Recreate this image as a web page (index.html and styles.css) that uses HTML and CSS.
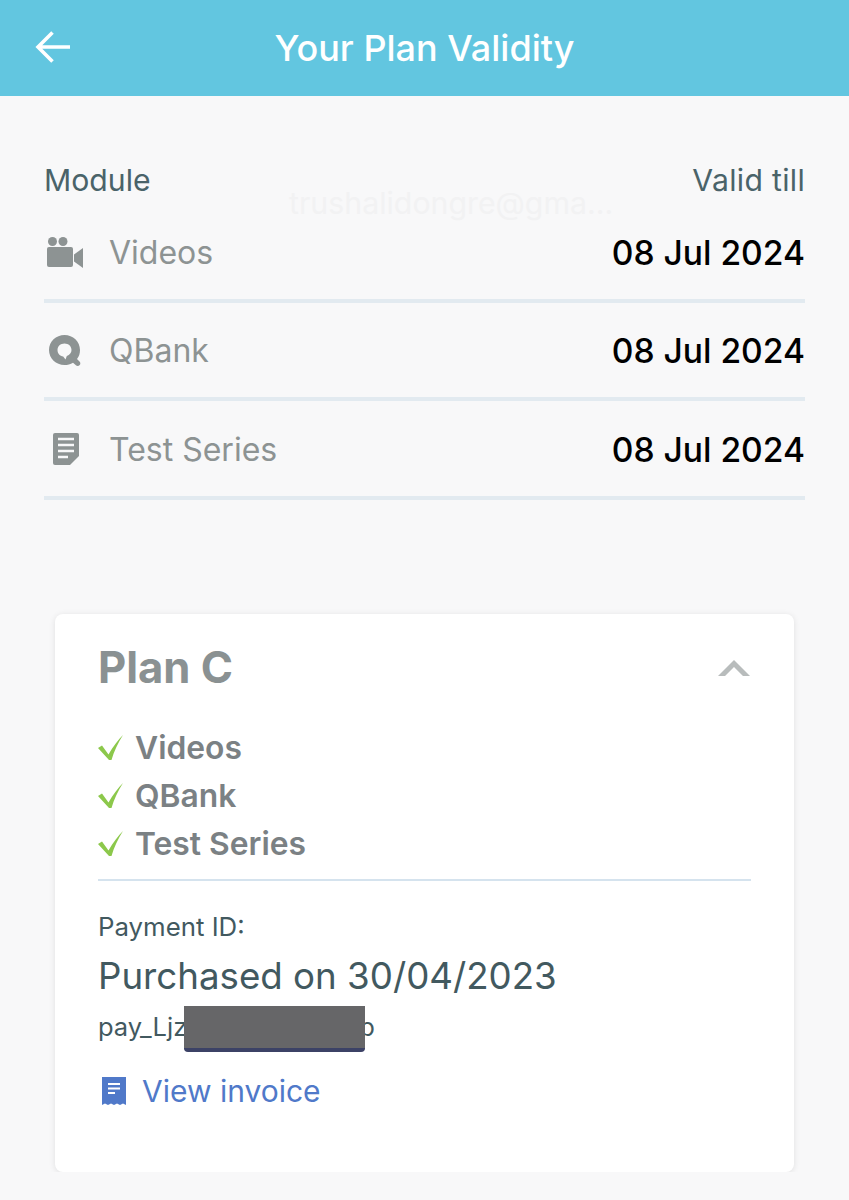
FILE: index.html
```html
<!DOCTYPE html>
<html>
<head>
  <title>Your Plan Validity</title>
  <link rel="stylesheet" href="styles.css">
</head>
<body>
  <div class="header">
    <svg class="back-icon" width="38" height="36" viewBox="0 0 38 36">
      <path d="M36 18H4M18.500 3.500L4 18l14.500 14.500" fill="none" stroke="#fff" stroke-width="3.600"/>
    </svg>
    <h1 class="title">Your Plan Validity</h1>
  </div>

  <div class="modules">
    <div class="modules-head">
      <span>Module</span>
      <span class="valid-till">Valid till</span>
    </div>
    <div class="watermark">trushalidongre@gma...</div>

    <div class="module-row">
      <div class="module-name">
        <svg class="module-icon" width="39" height="34" viewBox="-1 0 39 34">
          <circle cx="7.500" cy="6.500" r="4.500" fill="#8d9393"/>
          <circle cx="18" cy="6.500" r="4.500" fill="#8d9393"/>
          <rect x="2" y="12" width="26" height="20" rx="2" fill="#8d9393"/>
          <path d="M29 19.500l9-6.500v20l-9-6.500z" fill="#8d9393"/>
        </svg>
        <span>Videos</span>
      </div>
      <span class="module-date">08 Jul 2024</span>
    </div>

    <div class="module-row">
      <div class="module-name">
        <svg class="module-icon" width="39" height="34" viewBox="-2 0 39 34">
          <path fill-rule="evenodd" fill="#8d9393" d="M18.500 1C27 1 34 7.500 34 16c0 3.500-1 6.500-3 9l2.500 2.500c1 1 1.200 2.500.2 3.600-1 1.100-2.700 1.200-3.800.2L27 28.700c-2.500 1.500-5.500 2.300-8.500 2.300C10 31 3 24.500 3 16S10 1 18.500 1zM18.500 9.500c-4 0-7 2.800-7 6.500 0 3.500 2.500 6 5.700 6.500l2.300 3 1.300-3.600c3-1 4.700-3.200 4.700-5.900 0-3.700-3-6.500-7-6.500z"/>
        </svg>
        <span>QBank</span>
      </div>
      <span class="module-date">08 Jul 2024</span>
    </div>

    <div class="module-row">
      <div class="module-name">
        <svg class="module-icon" width="39" height="34" viewBox="-3 0 39 34">
          <path fill="#8d9393" d="M8 1h22a2 2 0 0 1 2 2v21l-9 9H8a2 2 0 0 1-2-2V3a2 2 0 0 1 2-2z"/>
          <path d="M11 7h16M11 13h16M11 19h16M11 25h10" stroke="#f8f8f9" stroke-width="2.400" fill="none"/>
        </svg>
        <span>Test Series</span>
      </div>
      <span class="module-date">08 Jul 2024</span>
    </div>
  </div>

  <div class="card">
    <div class="card-head">
      <h2 class="plan-name">Plan C</h2>
      <svg class="chevron" width="32" height="16" viewBox="0 0 32 16">
        <path d="M0 16L16 0l16 16h-7L16 7 7 16z" fill="#b8bcbc"/>
      </svg>
    </div>

    <ul class="features">
      <li>
        <svg width="26" height="26" viewBox="0 0 26 26"><path d="M0 13l4-2.500 6.500 9C15 11.500 20 5 25 0c-5 8-9 16-11.500 25h-2.500z" fill="#8cc84b"/></svg>
        Videos
      </li>
      <li>
        <svg width="26" height="26" viewBox="0 0 26 26"><path d="M0 13l4-2.500 6.500 9C15 11.500 20 5 25 0c-5 8-9 16-11.500 25h-2.500z" fill="#8cc84b"/></svg>
        QBank
      </li>
      <li>
        <svg width="26" height="26" viewBox="0 0 26 26"><path d="M0 13l4-2.500 6.500 9C15 11.500 20 5 25 0c-5 8-9 16-11.500 25h-2.500z" fill="#8cc84b"/></svg>
        Test Series
      </li>
    </ul>

    <div class="payment">
      <div class="payment-label">Payment ID:</div>
      <div class="purchased">Purchased on 30/04/2023</div>
      <div class="payment-id">pay_Ljz<span class="redacted-gap"><span class="redacted"></span></span>p</div>
      <a class="invoice" href="#">
        <svg class="invoice-icon" width="26" height="30" viewBox="0 0 26 30">
          <path fill="#5079c9" d="M1 1h24v28l-3-1.500-3 1.500-3-1.500-3 1.500-3-1.500-3 1.500-3-1.500-3 1.500z"/>
          <path d="M7 8h12M7 12.500h12M7 17h7" stroke="#fff" stroke-width="1.800" fill="none"/>
        </svg>
        View invoice
      </a>
    </div>
  </div>
</body>
</html>
```

FILE: styles.css
```css
* {
  box-sizing: border-box;
}

body {
  margin: 0;
  background-color: #f8f8f9;
  font-family: Inter, "Liberation Sans", sans-serif;
}

.header {
  position: relative;
  display: flex;
  align-items: center;
  justify-content: center;
  height: 96px;
  background-color: #62c6e0;
}

.back-icon {
  position: absolute;
  left: 34px;
  top: 29px;
}

.title {
  margin: 0;
  color: #fff;
  font-size: 36px;
  font-weight: 500;
}

.modules {
  position: relative;
  margin: 0 44px;
  padding-top: 67px;
}

.modules-head {
  display: flex;
  justify-content: space-between;
  margin-bottom: 7px;
  color: #4a6369;
  font-size: 30.200px;
  line-height: 34px;
}

.valid-till {
  letter-spacing: 0.3px;
}

.watermark {
  position: absolute;
  left: 245px;
  top: 91px;
  color: #f2f2f3;
  font-size: 30.300px;
  line-height: 32px;
}

.module-row {
  display: flex;
  align-items: center;
  justify-content: space-between;
  height: 98.500px;
  padding-top: 2px;
  border-bottom: 4px solid #e2eaf0;
}

.module-name {
  display: flex;
  align-items: center;
  gap: 26px;
  color: #8d9393;
  font-size: 32px;
}

.module-date {
  color: #000;
  font-size: 33.600px;
  font-weight: 500;
}

.card {
  margin: 114px 55px 0;
  height: 558px;
  padding: 26px 43px 0;
  background-color: #fff;
  border-radius: 8px;
  box-shadow: 0 1px 6px rgba(0, 0, 0, 0.1);
}

.card-head {
  display: flex;
  align-items: center;
  justify-content: space-between;
  height: 56px;
}

.plan-name {
  margin: 0;
  color: #8a9192;
  font-size: 43.600px;
  font-weight: 700;
}

.chevron {
  margin-top: 1px;
  margin-right: 1px;
}

.features {
  margin: 28px 0 0;
  padding: 0 0 11px;
  list-style: none;
  border-bottom: 2px solid #d5e3ee;
}

.features li {
  display: flex;
  align-items: center;
  gap: 11px;
  height: 48px;
  color: #7b8184;
  font-size: 31.800px;
  font-weight: 600;
}

.payment {
  padding-top: 30px;
}

.payment-label {
  color: #42595f;
  font-size: 25.800px;
  line-height: 32px;
}

.purchased {
  margin-top: 11px;
  color: #42595f;
  font-size: 36.700px;
  line-height: 44px;
}

.payment-id {
  margin-top: 13px;
  color: #42595f;
  font-size: 25.500px;
  line-height: 32px;
}

.redacted-gap {
  position: relative;
  display: inline-block;
  width: 172px;
}

.redacted {
  position: absolute;
  z-index: 1;
  left: -3px;
  top: -30px;
  width: 181px;
  height: 46px;
  background-color: #666668;
  border-bottom: 4px solid #3c4266;
  border-radius: 0 0 4px 4px;
}

.invoice {
  display: flex;
  align-items: center;
  gap: 15px;
  margin-top: 30px;
  color: #5079c9;
  font-size: 30px;
  text-decoration: none;
}

.invoice-icon {
  margin-left: 3px;
}
```
